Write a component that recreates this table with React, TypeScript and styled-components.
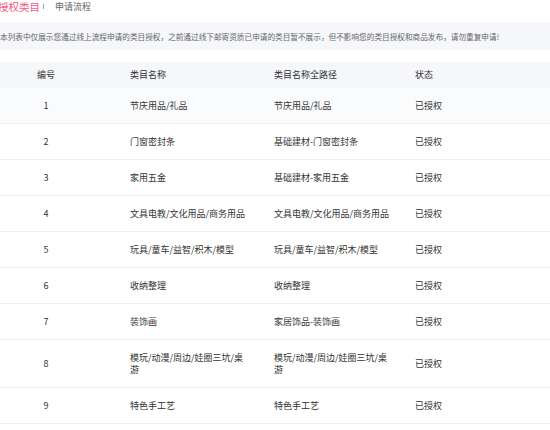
import React from "react";
import styled, { createGlobalStyle } from "styled-components";

const Global = createGlobalStyle`
  html, body { margin: 0; padding: 0; background: #ffffff; overflow: hidden; }
  body { font-family: "Noto Sans CJK SC", "Noto Sans", sans-serif; color: #333333; }
`;

const Page = styled.div`
  width: 550px;
  display: flex;
  flex-direction: column;
`;

const TabBar = styled.div`
  display: flex;
  align-items: center;
  height: 13px;
  margin-left: -2px;
`;

const Tab = styled.span<{ $active?: boolean }>`
  font-size: ${(p) => (p.$active ? "10.5px" : "9px")};
  line-height: 13px;
  color: ${(p) => (p.$active ? "#f5577f" : "#666666")};
  white-space: nowrap;
`;

const Sep = styled.span`
  display: inline-block;
  width: 1px;
  height: 5px;
  background: #a0a0a0;
  margin: 0 11px 0 3px;
`;

const Notice = styled.div`
  margin-top: 9px;
  height: 28px;
  display: flex;
  align-items: center;
  background: #f5f7fa;
  font-size: 7.65px;
  color: #666666;
  white-space: nowrap;
  overflow: hidden;
`;

const Table = styled.div`
  margin-top: 12px;
  display: flex;
  flex-direction: column;
`;

const Row = styled.div<{ $head?: boolean; $hover?: boolean }>`
  display: grid;
  grid-template-columns: 130px 144px 141px 1fr;
  background: ${(p) => (p.$head ? "#f5f7fa" : p.$hover ? "#fafbfc" : "#ffffff")};
  border-bottom: ${(p) => (p.$head ? "none" : "1px solid #eff1f4")};
  align-items: center;
`;

const Cell = styled.div<{ $head?: boolean; $center?: boolean }>`
  font-size: 9px;
  line-height: 11.5px;
  color: #333333;
  padding: ${(p) => (p.$head ? "7px 0 7.5px" : "12px 0 11.5px")};
  padding-right: ${(p) => (p.$center ? "38px" : "22px")};
  text-align: ${(p) => (p.$center ? "center" : "left")};
  word-break: break-all;
`;

const rows: [string, string, string][] = [
  ["1", "节庆用品/礼品", "节庆用品/礼品"],
  ["2", "门窗密封条", "基础建材-门窗密封条"],
  ["3", "家用五金", "基础建材-家用五金"],
  ["4", "文具电教/文化用品/商务用品", "文具电教/文化用品/商务用品"],
  ["5", "玩具/童车/益智/积木/模型", "玩具/童车/益智/积木/模型"],
  ["6", "收纳整理", "收纳整理"],
  ["7", "装饰画", "家居饰品-装饰画"],
  ["8", "模玩/动漫/周边/娃圈三坑/桌游", "模玩/动漫/周边/娃圈三坑/桌游"],
  ["9", "特色手工艺", "特色手工艺"],
];

export default function App() {
  return (
    <Page>
      <Global />
      <TabBar>
        <Tab $active>授权类目</Tab>
        <Sep />
        <Tab>申请流程</Tab>
      </TabBar>
      <Notice>
        本列表中仅展示您通过线上流程申请的类目授权，之前通过线下邮寄资质已申请的类目暂不展示，但不影响您的类目授权和商品发布，请勿重复申请!
      </Notice>
      <Table>
        <Row $head>
          <Cell $head $center>编号</Cell>
          <Cell $head>类目名称</Cell>
          <Cell $head>类目名称全路径</Cell>
          <Cell $head>状态</Cell>
        </Row>
        {rows.map(([id, name, path], i) => (
          <Row key={id} $hover={i === 0}>
            <Cell $center>{id}</Cell>
            <Cell>{name}</Cell>
            <Cell>{path}</Cell>
            <Cell>已授权</Cell>
          </Row>
        ))}
      </Table>
    </Page>
  );
}
